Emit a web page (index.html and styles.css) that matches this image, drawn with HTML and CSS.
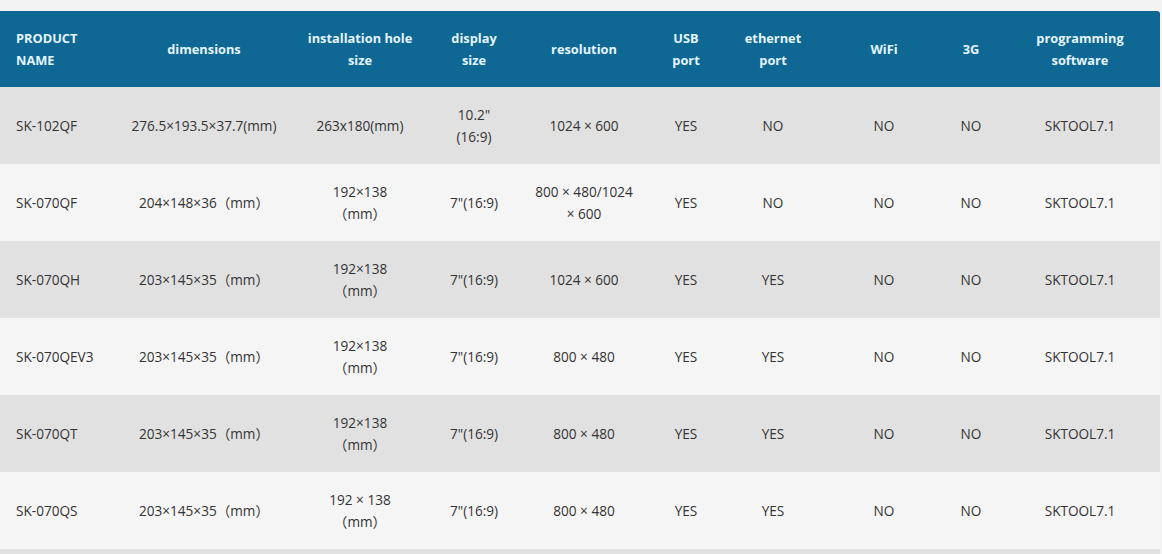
FILE: index.html
```html
<!DOCTYPE html>
<html lang="en">
<head>
<meta charset="utf-8">
<title>Product specifications</title>
<link rel="stylesheet" href="styles.css">
</head>
<body>
<div class="page">
<table class="spec">
  <colgroup>
    <col class="c1"><col class="c2"><col class="c3"><col class="c4"><col class="c5">
    <col class="c6"><col class="c7"><col class="c8"><col class="c9"><col class="c10">
  </colgroup>
  <thead>
    <tr>
      <th class="first">PRODUCT<br>NAME</th>
      <th>dimensions</th>
      <th>installation hole<br>size</th>
      <th>display<br>size</th>
      <th>resolution</th>
      <th>USB<br>port</th>
      <th>ethernet<br>port</th>
      <th>WiFi</th>
      <th>3G</th>
      <th class="last">programming<br>software</th>
    </tr>
  </thead>
  <tbody>
    <tr>
      <td class="first">SK-102QF</td>
      <td>276.5×193.5×37.7(mm)</td>
      <td>263x180(mm)</td>
      <td>10.2"<br>(16:9)</td>
      <td>1024 × 600</td>
      <td>YES</td><td>NO</td><td>NO</td><td>NO</td>
      <td>SKTOOL7.1</td>
    </tr>
    <tr>
      <td class="first">SK-070QF</td>
      <td>204×148×36（mm）</td>
      <td>192×138<br>（mm）</td>
      <td>7"(16:9)</td>
      <td>800 × 480/1024<br>× 600</td>
      <td>YES</td><td>NO</td><td>NO</td><td>NO</td>
      <td>SKTOOL7.1</td>
    </tr>
    <tr>
      <td class="first">SK-070QH</td>
      <td>203×145×35（mm）</td>
      <td>192×138<br>（mm）</td>
      <td>7"(16:9)</td>
      <td>1024 × 600</td>
      <td>YES</td><td>YES</td><td>NO</td><td>NO</td>
      <td>SKTOOL7.1</td>
    </tr>
    <tr>
      <td class="first">SK-070QEV3</td>
      <td>203×145×35（mm）</td>
      <td>192×138<br>（mm）</td>
      <td>7"(16:9)</td>
      <td>800 × 480</td>
      <td>YES</td><td>YES</td><td>NO</td><td>NO</td>
      <td>SKTOOL7.1</td>
    </tr>
    <tr>
      <td class="first">SK-070QT</td>
      <td>203×145×35（mm）</td>
      <td>192×138<br>（mm）</td>
      <td>7"(16:9)</td>
      <td>800 × 480</td>
      <td>YES</td><td>YES</td><td>NO</td><td>NO</td>
      <td>SKTOOL7.1</td>
    </tr>
    <tr>
      <td class="first">SK-070QS</td>
      <td>203×145×35（mm）</td>
      <td>192 × 138<br>（mm）</td>
      <td>7"(16:9)</td>
      <td>800 × 480</td>
      <td>YES</td><td>YES</td><td>NO</td><td>NO</td>
      <td>SKTOOL7.1</td>
    </tr>
    <tr>
      <td class="first"></td><td></td><td></td><td></td><td></td>
      <td></td><td></td><td></td><td></td><td></td>
    </tr>
  </tbody>
</table>
</div>
</body>
</html>
```

FILE: styles.css
```css
html, body {
  margin: 0;
  padding: 0;
  background: #f3f3f3;
}

.page {
  padding-top: 11px;
  width: 1160px;
}

.spec {
  width: 1160px;
  table-layout: fixed;
  border-collapse: separate;
  border-spacing: 0;
  font-family: "Open Sans", "Noto Sans", "Noto Sans CJK SC", sans-serif;
  font-size: 13.6px;
  line-height: 22px;
  color: #333333;
}

.c1 { width: 120px; }
.c2 { width: 168px; }
.c3 { width: 144px; }
.c4 { width: 84px; }
.c5 { width: 136px; }
.c6 { width: 68px; }
.c7 { width: 106px; }
.c8 { width: 116px; }
.c9 { width: 58px; }
.c10 { width: 160px; }

.spec th {
  background: #0f6794;
  color: #e4f5ff;
  font-weight: 700;
  font-size: 12.8px;
  height: 76px;
  padding: 0 4px;
  text-align: center;
  vertical-align: middle;
  white-space: nowrap;
}

.spec th.first { text-align: left; padding-left: 16px; }
.spec th.last { border-top-right-radius: 3px; }

.spec td {
  height: 77px;
  padding: 0 4px;
  text-align: center;
  vertical-align: middle;
  white-space: nowrap;
}

.spec td.first { text-align: left; padding-left: 16px; }

.spec tbody tr:nth-child(odd) td { background: #e1e1e1; }
.spec tbody tr:nth-child(even) td { background: #f5f5f5; }
```
